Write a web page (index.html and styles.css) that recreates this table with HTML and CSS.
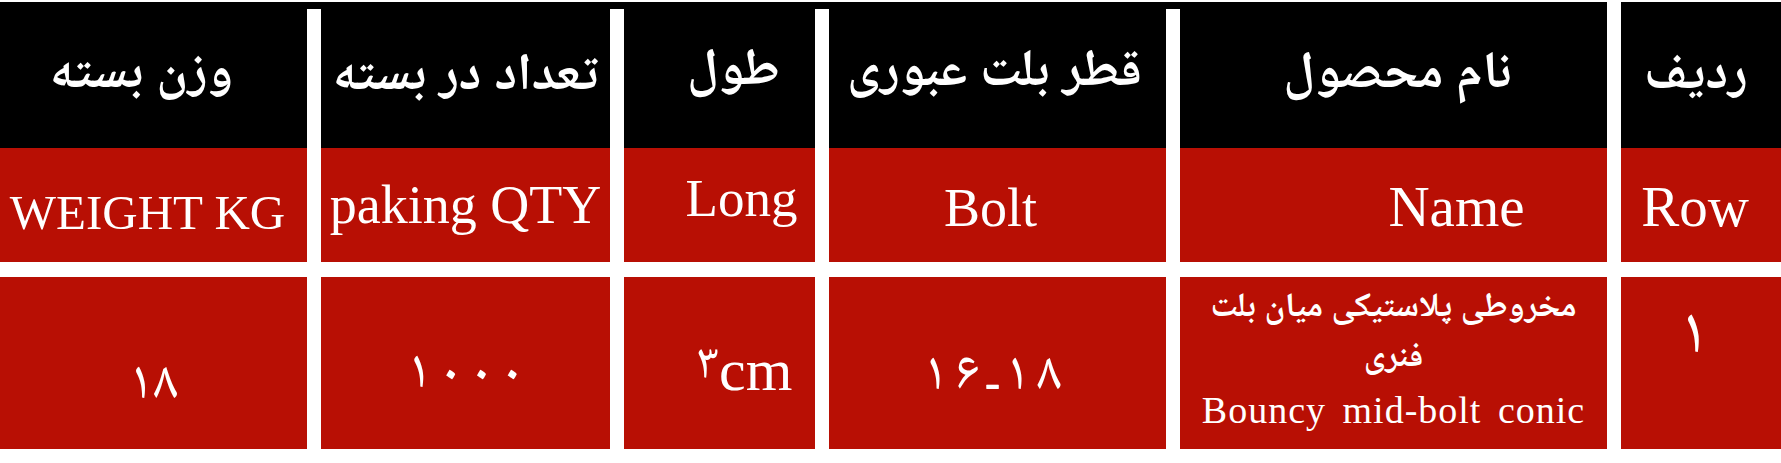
FILE: index.html
```html
<!DOCTYPE html>
<html lang="fa">
<head>
<meta charset="utf-8">
<title>جدول مشخصات محصول</title>
<link rel="stylesheet" href="styles.css">
</head>
<body>
<div class="sheet" dir="rtl">
  <div class="cell head c-row"><span>ردیف</span></div>
  <div class="cell head c-name"><span>نام محصول</span></div>
  <div class="cell head c-bolt"><span>قطر بلت عبوری</span></div>
  <div class="cell head c-long"><span>طول</span></div>
  <div class="cell head c-qty"><span>تعداد در بسته</span></div>
  <div class="cell head c-weight"><span>وزن بسته</span></div>

  <div class="cell en c-row"><span dir="ltr">Row</span></div>
  <div class="cell en c-name"><span dir="ltr">Name</span></div>
  <div class="cell en c-bolt"><span dir="ltr">Bolt</span></div>
  <div class="cell en c-long"><span dir="ltr">Long</span></div>
  <div class="cell en c-qty"><span dir="ltr">paking QTY</span></div>
  <div class="cell en c-weight"><span dir="ltr">WEIGHT KG</span></div>

  <div class="cell val c-row"><span>۱</span></div>
  <div class="cell val c-name">
    <span class="name-fa">مخروطی پلاستیکی میان بلت<br>فنری</span>
    <span class="name-en" dir="ltr">Bouncy mid-bolt conic</span>
  </div>
  <div class="cell val c-bolt"><span class="force-ltr digits wide"><span>۱</span><span>۶</span><span>ـ</span><span>۱</span><span>۸</span></span></div>
  <div class="cell val c-long"><span class="force-ltr"><span class="raised">۳</span>cm</span></div>
  <div class="cell val c-qty"><span class="force-ltr digits"><span>۱</span><span>۰</span><span>۰</span><span>۰</span></span></div>
  <div class="cell val c-weight"><span>۱۸</span></div>
</div>
</body>
</html>
```

FILE: styles.css
```css
html, body {
  margin: 0;
  padding: 0;
  background: #ffffff;
}

body {
  font-family: "Liberation Serif", "Noto Naskh Arabic", "DejaVu Sans", serif;
  color: #ffffff;
}

.sheet {
  display: grid;
  grid-template-columns: 160px 427px 337px 191px 289px 307px;
  grid-template-rows: 146px 114px 187px;
  column-gap: 14px;
  width: 1781px;
  margin-top: 2px;
  background: linear-gradient(#000000, #000000) no-repeat left top / 1607px 7px;
}

.cell {
  display: flex;
  justify-content: center;
  align-items: flex-start;
  line-height: 1;
  white-space: nowrap;
}

.head {
  background: #000000;
  align-items: center;
  font-size: 52px;
  font-weight: bold;
  padding-bottom: 16px;
}

.head.c-weight { padding-top: 6px; padding-right: 24px; }
.head.c-qty { padding-top: 10px; }
.head.c-long { padding-top: 0; padding-left: 28px; }
.head.c-bolt { padding-top: 2px; padding-right: 6px; }
.head.c-name { padding-top: 6px; padding-left: 8px; }
.head.c-row { padding-top: 8px; padding-right: 10px; }

.en {
  background: #b80f04;
  font-size: 54px;
}

.val {
  background: #b80f04;
  margin-top: 15px;
  font-size: 55px;
}

/* row 1 (English labels) positions */
.en.c-weight { font-size: 49px; padding-top: 40px; padding-right: 12px; }
.en.c-qty { padding-top: 30px; }
.en.c-long { font-size: 53px; padding-top: 24px; padding-left: 44px; }
.en.c-bolt { padding-top: 33px; padding-right: 14px; }
.en.c-name { font-size: 57px; padding-top: 30px; padding-left: 126px; }
.en.c-row { font-size: 57px; padding-top: 30px; padding-right: 12px; }

/* row 2 values */
.val.c-weight { padding-top: 75px; }
.val.c-qty { padding-top: 64px; }
.val.c-long { font-size: 60px; padding-top: 59px; padding-left: 50px; }
.val.c-bolt { padding-top: 66px; padding-right: 10px; }
.val.c-row { font-size: 66px; padding-top: 20px; padding-right: 14px; }

.digits > span + span {
  margin-left: 6px;
}

.digits.wide > span + span {
  margin-left: 7px;
}

.raised {
  font-size: 50px;
  vertical-align: 12px;
}

.force-ltr {
  direction: ltr;
  unicode-bidi: bidi-override;
}

.val.c-name {
  flex-direction: column;
  align-items: center;
  padding-top: 0;
}

.name-fa {
  font-size: 34px;
  font-weight: bold;
  line-height: 50px;
  text-align: center;
  margin-top: -18px;
}

.name-en {
  font-size: 38px;
  letter-spacing: 1px;
  word-spacing: 6px;
  margin-top: 11px;
}
```
